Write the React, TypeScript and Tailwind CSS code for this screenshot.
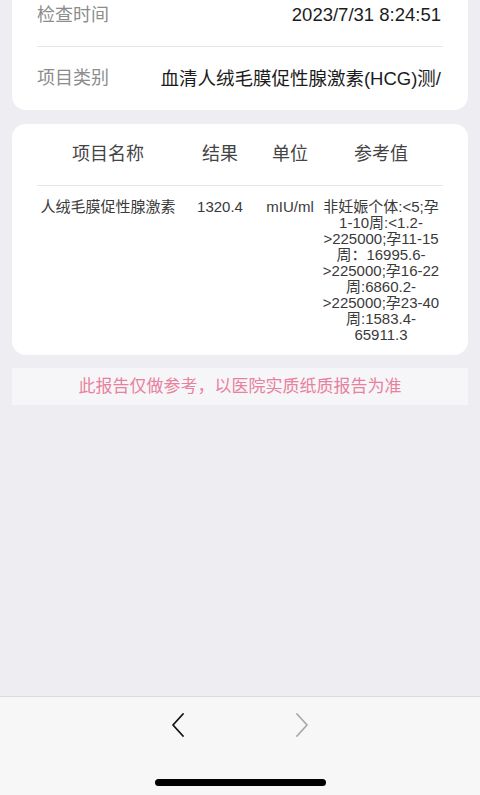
const font = "font-['Liberation_Sans','Noto_Sans_CJK_SC',sans-serif]";

const refLines = [
  "非妊娠个体:<5;孕",
  "1-10周:<1.2-",
  ">225000;孕11-15",
  "周：16995.6-",
  ">225000;孕16-22",
  "周:6860.2-",
  ">225000;孕23-40",
  "周:1583.4-",
  "65911.3",
];

function InfoRow({ label, value, last }: { label: string; value: string; last?: boolean }) {
  return (
    <div className={`h-[63px] flex items-center justify-between gap-4 ${last ? "" : "border-b border-[#e6e6e8]"}`}>
      <span className="text-[18px] text-[#8c8c8c] shrink-0">{label}</span>
      <span className="text-[18.5px] text-[#1c1c1c] whitespace-nowrap overflow-hidden pr-[2px]">{value}</span>
    </div>
  );
}

function Chevron({ dir, color }: { dir: "left" | "right"; color: string }) {
  const pts = dir === "left" ? "11,1 1,12 11,23" : "1,1 11,12 1,23";
  return (
    <svg width="12" height="24" viewBox="0 0 12 24" fill="none">
      <polyline points={pts} stroke={color} strokeWidth="1.8" strokeLinecap="round" strokeLinejoin="round" />
    </svg>
  );
}

export default function App() {
  return (
    <div className={`w-[480px] h-[795px] bg-[#eeedf2] flex flex-col overflow-hidden ${font}`}>
      <div className="flex-1 px-3 overflow-hidden">
        {/* 基本信息 */}
        <div className="bg-white rounded-b-[14px] px-[25px] -mt-4">
          <InfoRow label="检查时间" value="2023/7/31 8:24:51" />
          <InfoRow label="项目类别" value="血清人绒毛膜促性腺激素(HCG)测/" last />
        </div>

        {/* 检验结果 */}
        <div className="bg-white rounded-[14px] px-[25px] mt-[14px]">
          <div className="h-[62px] grid grid-cols-[142px_82px_58px_124px] items-center text-center text-[18px] text-[#444] border-b border-[#e6e6e8]">
            <span>项目名称</span>
            <span>结果</span>
            <span>单位</span>
            <span>参考值</span>
          </div>
          <div className="grid grid-cols-[142px_82px_58px_124px] items-start text-center text-[15px] leading-[16px] text-[#3a3a3a] pt-[13px] pb-[12px]">
            <span className="whitespace-nowrap">人绒毛膜促性腺激素</span>
            <span>1320.4</span>
            <span>mIU/ml</span>
            <div className="flex flex-col items-center">
              {refLines.map((l, i) => (
                <span key={i} className="whitespace-pre">{l}</span>
              ))}
            </div>
          </div>
        </div>

        <div className="mt-[13px] h-[37px] bg-[#f6f6f8] flex items-center justify-center text-[17px] text-[#e8819f]">
          此报告仅做参考，以医院实质纸质报告为准
        </div>
      </div>

      {/* 底部导航 */}
      <div className="h-[99px] bg-[#f7f7f7] border-t border-[#dcdcdf] flex flex-col items-center">
        <div className="pt-[16px] flex justify-center gap-[112px]">
          <Chevron dir="left" color="#111" />
          <Chevron dir="right" color="#a9a9a9" />
        </div>
        <div className="mt-[42px] w-[171px] h-[7px] rounded-full bg-black" />
      </div>
    </div>
  );
}
